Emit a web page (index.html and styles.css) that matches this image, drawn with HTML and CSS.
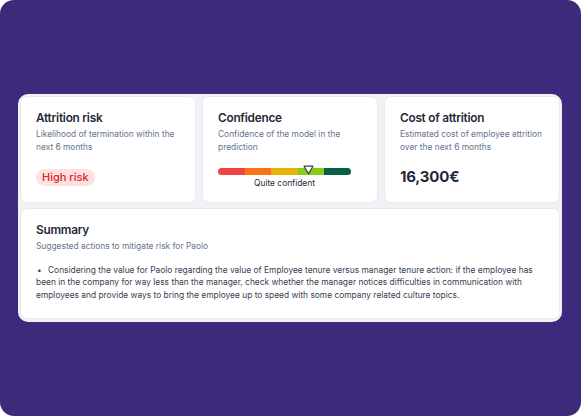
FILE: index.html
```html
<!DOCTYPE html>
<html>
<head>
<meta charset="utf-8">
<link rel="stylesheet" href="styles.css">
</head>
<body>
<div class="frame">
  <div class="panel">
    <div class="row">
      <div class="card">
        <h2 class="title">Attrition risk</h2>
        <p class="sub">Likelihood of termination within the next 6 months</p>
        <div class="card-foot">
          <span class="badge">High risk</span>
        </div>
      </div>
      <div class="card">
        <h2 class="title">Confidence</h2>
        <p class="sub">Confidence of the model in the prediction</p>
        <div class="card-foot">
          <div class="gauge">
            <div class="bar">
              <span class="seg s1"></span><span class="seg s2"></span><span class="seg s3"></span><span class="seg s4"></span><span class="seg s5"></span>
              <svg class="marker" width="11" height="10" viewBox="0 0 11 10"><path d="M1 1.2 H10 L5.5 8.8 Z" fill="#fff" stroke="#374151" stroke-width="1.2" stroke-linejoin="round"/></svg>
            </div>
            <div class="gauge-label">Quite confident</div>
          </div>
        </div>
      </div>
      <div class="card">
        <h2 class="title">Cost of attrition</h2>
        <p class="sub">Estimated cost of employee attrition over the next 6 months</p>
        <div class="card-foot">
          <span class="amount">16,300€</span>
        </div>
      </div>
    </div>
    <div class="card summary">
      <h2 class="title">Summary</h2>
      <p class="sub">Suggested actions to mitigate risk for Paolo</p>
      <ul class="list">
        <li>Considering the value for Paolo regarding the value of Employee tenure versus manager tenure action: if the employee has been in the company for way less than the manager, check whether the manager notices difficulties in communication with employees and provide ways to bring the employee up to speed with some company related culture topics.</li>
      </ul>
    </div>
  </div>
</div>
</body>
</html>
```
FILE: styles.css
```css
html, body {
  margin: 0;
  padding: 0;
  background: #ffffff;
}
body {
  font-family: Inter, "Noto Sans", sans-serif;
  width: 581px;
  height: 416px;
}
.frame {
  box-sizing: border-box;
  width: 581px;
  height: 416px;
  background: #3b2b7a;
  border-radius: 14px;
  padding: 94px 19px 0 18px;
}
.panel {
  background: #f1f2f5;
  border-radius: 10px;
  padding: 2px;
  display: flex;
  flex-direction: column;
  gap: 5px;
  height: 228px;
  box-sizing: border-box;
}
.row {
  display: grid;
  grid-template-columns: 1fr 1fr 1fr;
  gap: 6px;
  height: 107px;
}
.card {
  background: #ffffff;
  border: 1px solid #e8eaef;
  border-radius: 7px;
  padding: 13px 10px 10px 15px;
  display: flex;
  flex-direction: column;
  box-sizing: border-box;
}
.title {
  margin: 0;
  font-size: 11.8px;
  font-weight: 600;
  color: #1f2937;
  line-height: 16px;
  letter-spacing: -0.25px;
}
.sub {
  margin: 2px 0 0 0;
  font-size: 8.4px;
  line-height: 12.5px;
  color: #64748b;
}
.card-foot {
  margin-top: auto;
  display: flex;
}
.badge {
  background: #fde1e1;
  color: #dc2626;
  font-size: 11px;
  font-weight: 500;
  border-radius: 9px;
  padding: 2px 6px;
  line-height: 13px;
  margin-bottom: 6px;
}
.gauge {
  width: 133px;
  display: flex;
  flex-direction: column;
  align-items: center;
  margin-bottom: 3px;
}
.bar {
  position: relative;
  display: flex;
  width: 133px;
  height: 7px;
  border-radius: 4px;
}
.seg { flex: 1; height: 7px; }
.s1 { background: #ef4444; border-radius: 4px 0 0 4px; }
.s2 { background: #f97316; }
.s3 { background: #eab308; }
.s4 { background: #84cc16; }
.s5 { background: #065f46; border-radius: 0 4px 4px 0; }
.marker {
  position: absolute;
  left: 85px;
  top: -3px;
}
.gauge-label {
  margin-top: 3px;
  font-size: 8.4px;
  color: #1f2937;
  line-height: 11px;
}
.amount {
  font-size: 15px;
  font-weight: 700;
  color: #1f2937;
  margin-bottom: 6px;
  letter-spacing: -0.2px;
}
.summary {
  height: 111px;
}
.list {
  margin: 11px 0 0 0;
  padding: 0;
  list-style: none;
}
.list li {
  font-size: 8.4px;
  line-height: 12.5px;
  color: #374151;
  position: relative;
  text-indent: 12px;
}
.list li::before {
  content: "•";
  position: absolute;
  left: 1px;
  text-indent: 0;
}
```
